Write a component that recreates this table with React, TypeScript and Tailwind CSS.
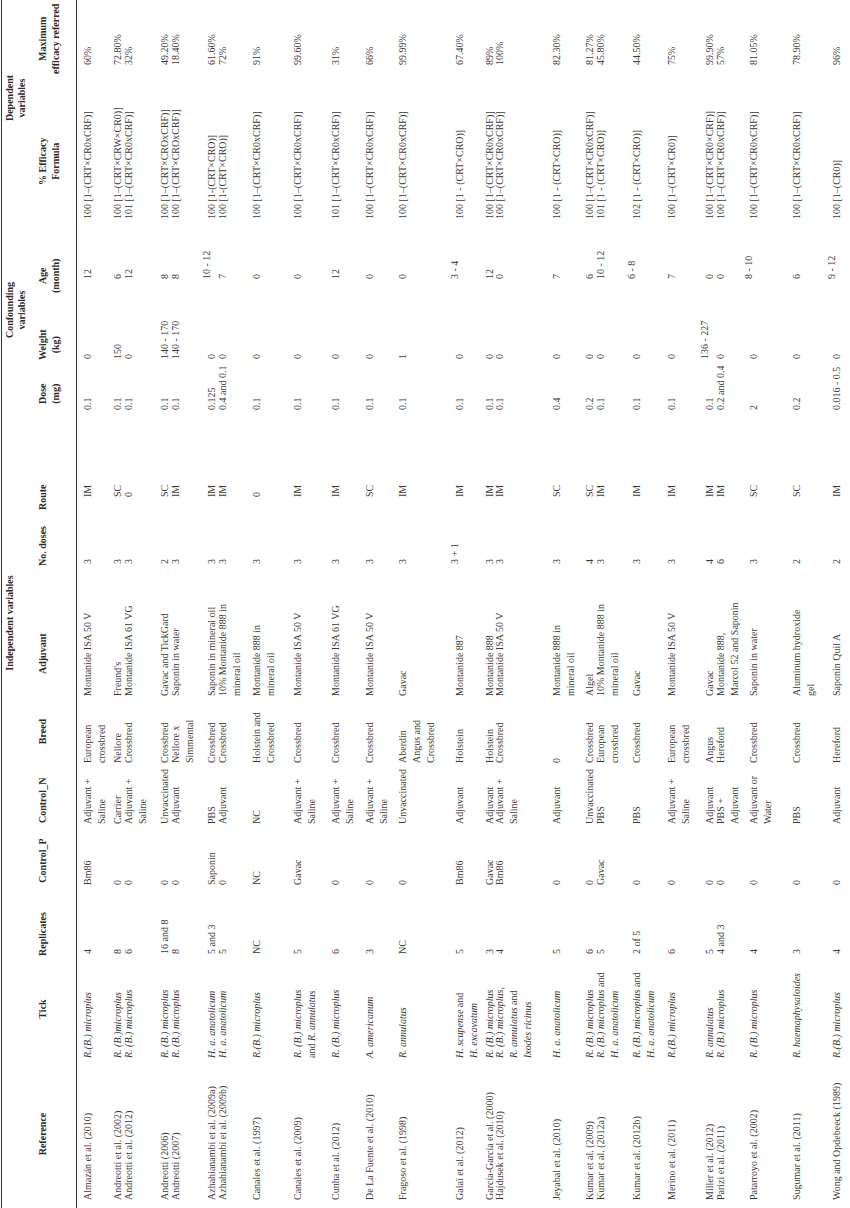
import type { ReactNode } from "react";

type Col = { w: string; head: string[]; hc: string; vc: string };

// Column layout along the (unrotated) table width of 1208px
const COLS: Col[] = [
  { w: "w-[148px]", head: ["Reference"], hc: "text-center", vc: "pl-[8px]" },
  { w: "w-[102px]", head: ["Tick"], hc: "text-center", vc: "pl-[2px]" },
  { w: "w-[62px]", head: ["Replicates"], hc: "text-left pl-[2px]", vc: "pl-[4px]" },
  { w: "w-[71px]", head: ["Control_P"], hc: "text-center", vc: "pl-[11px]" },
  { w: "w-[60px]", head: ["Control_N"], hc: "text-left pl-[2px]", vc: "pl-[1px]" },
  { w: "w-[67px]", head: ["Breed"], hc: "text-center", vc: "pl-[2px]" },
  { w: "w-[131px]", head: ["Adjuvant"], hc: "text-left pl-[24px]", vc: "pl-[2px]" },
  { w: "w-[57px]", head: ["No. doses"], hc: "text-left pl-[1px]", vc: "pl-[3px]" },
  { w: "w-[98px]", head: ["Route"], hc: "text-left", vc: "pl-[13px]" },
  { w: "w-[50px]", head: ["Dose", "(mg)"], hc: "text-left pl-[8px]", vc: "pl-[2px]" },
  { w: "w-[69px]", head: ["Weight", "(kg)"], hc: "text-left pl-[2px]", vc: "pl-[3px]" },
  { w: "w-[72px]", head: ["Age", "(month)"], hc: "text-left", vc: "pl-[14px]" },
  { w: "w-[147px]", head: ["% Efficacy", "Formula"], hc: "text-left pl-[36px]", vc: "pl-[2px]" },
  { w: "w-[90px]", head: ["Maximum", "efficacy referred"], hc: "text-left", vc: "pl-[9px]" },
];

function lines(...parts: ReactNode[]) {
  return parts.map((p, i) => (
    <span key={i} className="block">
      {p}
    </span>
  ));
}

// values that sit a little above their row in the original
function up(v: ReactNode) {
  return <span className="block -mt-[5px]">{v}</span>;
}

type Row = { h: string; cells: ReactNode[] };

const ROWS: Row[] = [
  {
    h: "h-[30px]",
    cells: ["Almazán et al. (2010)", <i>R.(B.) microplus</i>, "4", "Bm86", lines("Adjuvant +", "Saline"), lines("European", "crossbred"), "Montanide ISA 50 V", "3", "IM", "0.1", "0", "12", "100 [1–(CRT×CR0xCRF)]", "60%"],
  },
  {
    h: "h-[11px]",
    cells: ["Andreotti et al. (2002)", <i>R. (B.)microplus</i>, "8", "0", "Carrier", "Nellore", "Freund's", "3", "SC", "0.1", "150", "6", "100 [1–(CRT×CRW×CR0)]", "72.80%"],
  },
  {
    h: "h-[36px]",
    cells: ["Andreotti et al. (2012)", <i>R. (B.) microplus</i>, "6", "0", lines("Adjuvant +", "Saline"), "Crossbred", "Montanide ISA 61 VG", "3", "0", "0.1", "0", "12", "101 [1–(CRT×CR0xCRF)]", "32%"],
  },
  {
    h: "h-[11px]",
    cells: ["Andreotti (2006)", <i>R. (B.) microplus</i>, "16 and 8", "0", "Unvaccinated", "Crossbred", "Gavac and TickGard", "2", "SC", "0.1", "140 - 170", "8", "100 [1–(CRT×CROxCRF)]", "49.20%"],
  },
  {
    h: "h-[36px]",
    cells: ["Andreotti (2007)", <i>R. (B.) microplus</i>, "8", "0", "Adjuvant", lines("Nellore x", "Simmental"), "Saponin in water", "3", "IM", "0.1", "140 - 170", "8", "100 [1–(CRT×CROxCRF)]", "18.40%"],
  },
  {
    h: "h-[11px]",
    cells: ["Azhahianambi et al. (2009a)", <i>H. a. anatolicum</i>, "5 and 3", "Saponin", "PBS", "Crossbred", "Saponin in mineral oil", "3", "IM", "0.125", "0", up("10 - 12"), "100 [1-(CRT×CRO)]", "61.60%"],
  },
  {
    h: "h-[34px]",
    cells: ["Azhahianambi et al. (2009b)", <i>H. a. anatolicum</i>, "5", "0", "Adjuvant", "Crossbred", lines("10% Montanide 888 in", "mineral oil"), "3", "IM", "0.4 and 0.1", "0", "7", "100 [1-(CRT×CRO)]", "72%"],
  },
  {
    h: "h-[41px]",
    cells: ["Canales et al. (1997)", <i>R.(B.) microplus</i>, "NC", "NC", "NC", lines("Holstein and", "Crossbred"), lines("Montanide 888 in", "mineral oil"), "3", "0", "0.1", "0", "0", "100 [1–(CRT×CR0xCRF)]", "91%"],
  },
  {
    h: "h-[38px]",
    cells: [
      "Canales et al. (2009)",
      lines(<i>R. (B.) microplus</i>, <>and <i>R. annulatus</i></>),
      "5", "Gavac", lines("Adjuvant +", "Saline"), "Crossbred", "Montanide ISA 50 V", "3", "IM", "0.1", "0", "0", "100 [1–(CRT×CR0xCRF)]", "99.60%",
    ],
  },
  {
    h: "h-[34px]",
    cells: ["Cunha et al. (2012)", <i>R. (B.) microplus</i>, "6", "0", lines("Adjuvant +", "Saline"), "Crossbred", "Montanide ISA 61 VG", "3", "IM", "0.1", "0", "12", "101 [1–(CRT×CR0xCRF)]", "31%"],
  },
  {
    h: "h-[33px]",
    cells: ["De La Fuente et al. (2010)", <i>A. americanum</i>, "3", "0", lines("Adjuvant +", "Saline"), "Crossbred", "Montanide ISA 50 V", "3", "SC", "0.1", "0", "0", "100 [1–(CRT×CR0xCRF)]", "66%"],
  },
  {
    h: "h-[57px]",
    cells: ["Fragoso et al. (1998)", <i>R. annulatus</i>, "NC", "0", "Unvaccinated", lines("Aberdin", "Angus and", "Crossbred"), "Gavac", "3", "IM", "0.1", "1", "0", "100 [1–(CRT×CR0xCRF)]", "99.99%"],
  },
  {
    h: "h-[30px]",
    cells: [
      "Galaï et al. (2012)",
      lines(<><i>H. scupense</i> and</>, <i>H. excavatum</i>),
      "5", "Bm86", "Adjuvant", "Holstein", "Montanide 887", up("3 + 1"), "IM", "0.1", "0", up("3 - 4"), "100 [1 - (CRT×CRO)]", "67.40%",
    ],
  },
  {
    h: "h-[10px]",
    cells: ["García-García et al. (2000)", <i>R. (B.) microplus</i>, "3", "Gavac", "Adjuvant", "Holstein", "Montanide 888", "3", "IM", "0.1", "0", "12", "100 [1–(CRT×CR0xCRF)]", "89%"],
  },
  {
    h: "h-[57px]",
    cells: [
      "Hajdusek et al. (2010)",
      lines(<i>R. (B.) microplus,</i>, <><i>R. annulatus</i> and</>, <i>Ixodes ricinus</i>),
      "4", "Bm86", lines("Adjuvant +", "Saline"), "Crossbred", "Montanide ISA 50 V", "3", "IM", "0.1", "0", "0", "100 [1–(CRT×CR0xCRF)]", "100%",
    ],
  },
  {
    h: "h-[33px]",
    cells: ["Jeyabal et al. (2010)", <i>H. a. anatolicum</i>, "5", "0", "Adjuvant", "0", lines("Montanide 888 in", "mineral oil"), "3", "SC", "0.4", "0", "7", "100 [1 - (CRT×CRO)]", "82.30%"],
  },
  {
    h: "h-[11px]",
    cells: ["Kumar et al. (2009)", <i>R. (B.) microplus</i>, "6", "0", "Unvaccinated", "Crossbred", "Algel", "4", "SC", "0.2", "0", "6", "100 [1–(CRT×CR0xCRF)]", "81.27%"],
  },
  {
    h: "h-[36px]",
    cells: [
      "Kumar et al. (2012a)",
      lines(<><i>R. (B.) microplus</i> and</>, <i>H. a. anatolicum</i>),
      "5", "Gavac", "PBS", lines("European", "crossbred"), lines("10% Montanide 888 in", "mineral oil"), "3", "IM", "0.1", "0", "10 - 12", "101 [1 - (CRT×CRO)]", "45.80%",
    ],
  },
  {
    h: "h-[35px]",
    cells: [
      "Kumar et al. (2012b)",
      lines(<><i>R. (B.) microplus</i> and</>, <i>H. a. anatolicum</i>),
      "2 of 5", "0", "PBS", "Crossbred", "Gavac", "3", "IM", "0.1", "0", up("6 - 8"), "102 [1 - (CRT×CRO)]", "44.50%",
    ],
  },
  {
    h: "h-[38px]",
    cells: ["Merino et al. (2011)", <i>R.(B.) microplus</i>, "6", "0", lines("Adjuvant +", "Saline"), lines("European", "crossbred"), "Montanide ISA 50 V", "3", "IM", "0.1", "0", "7", "100 [1–(CRT×CR0)]", "75%"],
  },
  {
    h: "h-[11px]",
    cells: ["Miller et al. (2012)", <i>R. annulatus</i>, "5", "0", "Adjuvant", "Angus", "Gavac", "4", "IM", "0.1", up("136 - 227"), "0", "100 [1–(CRT×CR0×CRF)]", "99.90%"],
  },
  {
    h: "h-[33px]",
    cells: ["Parizi et al. (2011)", <i>R. (B.) microplus</i>, "4 and 3", "0", lines("PBS +", "Adjuvant"), "Hereford", lines("Montanide 888,", "Marcol 52 and Saponin"), "6", "IM", "0.2 and 0.4", "0", "0", "100 [1–(CRT×CR0xCRF)]", "57%"],
  },
  {
    h: "h-[43px]",
    cells: ["Patarroyo et al. (2002)", <i>R. (B.) microplus</i>, "4", "0", lines("Adjuvant or", "Water"), "Crossbred", "Saponin in water", "3", "SC", "2", "0", up("8 - 10"), "100 [1–(CRT×CR0xCRF)]", "81.05%"],
  },
  {
    h: "h-[40px]",
    cells: ["Sugumar et al. (2011)", <i>R. haemaphysaloides</i>, "3", "0", "PBS", "Crossbred", lines("Aluminum hydroxide", "gel"), "2", "SC", "0.2", "0", "6", "100 [1–(CRT×CR0xCRF)]", "78.90%"],
  },
  {
    h: "h-[13px]",
    cells: ["Wong and Opdebeeck (1989)", <i>R.(B.) microplus</i>, "4", "0", "Adjuvant", "Hereford", "Saponin Quil A", "2", "IM", "0.016 - 0.5", "0", up("9 - 12"), "100 [1–(CR0)]", "96%"],
  },
];

export default function App() {
  return (
    <div className="w-[850px] h-[1208px] overflow-hidden bg-white">
      {/* the table is set sideways, as on the scanned page */}
      <div className="w-[1208px] h-[850px] origin-top-left translate-y-[1208px] -rotate-90 pt-[1px] font-['Liberation_Serif',serif] text-[10px] text-[#3a3a3a]">
        <div className="border-t border-[#333]">
          {/* group headers */}
          <div className="flex h-[27px] pt-[2px] font-bold leading-[12px] text-[#2a2a2a]">
            <div className="ml-[500px] w-[170px] shrink-0 text-center">Independent variables</div>
            <div className="ml-[180px] w-[96px] shrink-0 text-center">
              Confounding
              <br />
              variables
            </div>
            <div className="ml-[114px] w-[100px] shrink-0 text-center">
              Dependent
              <br />
              variables
            </div>
          </div>

          {/* column headers */}
          <div className="flex h-[48px] pt-[7px] font-bold leading-[13px] text-[#2a2a2a] border-b border-[#333]">
            {COLS.map((c, i) => (
              <div key={i} className={`${c.w} ${c.hc} shrink-0 whitespace-nowrap`}>
                <span className="inline-block text-center">
                  {c.head.map((t, j) => (
                    <span key={j} className="block">
                      {t}
                    </span>
                  ))}
                </span>
              </div>
            ))}
          </div>
        </div>

        {/* body rows */}
        <div className="pt-[4px] leading-[14px]">
          {ROWS.map((r, i) => (
            <div key={i} className={`flex ${r.h}`}>
              {r.cells.map((cell, j) => (
                <div key={j} className={`${COLS[j].w} ${COLS[j].vc} shrink-0 whitespace-nowrap`}>
                  {cell}
                </div>
              ))}
            </div>
          ))}
        </div>
      </div>
    </div>
  );
}
